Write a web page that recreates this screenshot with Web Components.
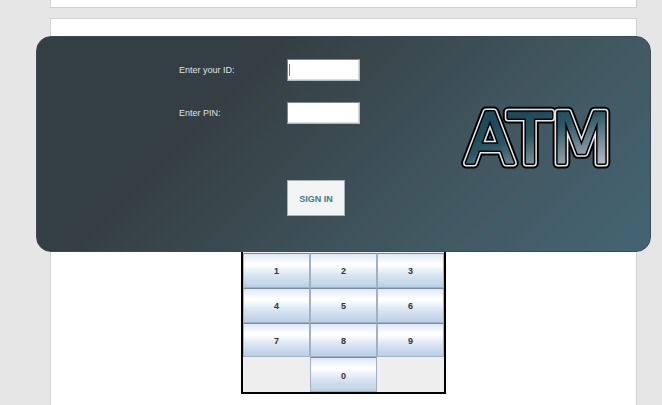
<!DOCTYPE html>
<html lang="en">
<head>
<meta charset="utf-8">
<title>ATM</title>
<style>
html, body { height: 100%; }
body { margin: 0; background: #e6e6e6; font-family: "Liberation Sans", Arial, sans-serif; font-size: 10px; }
</style>
</head>
<body>
<atm-page>
  <page-card slot="previous"></page-card>
  <page-card slot="current">
    <login-panel>
      <login-field label="Enter your ID:" name="id" type="text" active></login-field>
      <login-field label="Enter PIN:" name="pin" type="password"></login-field>
      <sign-button slot="action">SIGN IN</sign-button>
      <atm-logo slot="logo"></atm-logo>
    </login-panel>
    <key-pad></key-pad>
  </page-card>
</atm-page>

<script>
const define = (name, html, setup) => {
  const template = document.createElement('template');
  template.innerHTML = html;
  customElements.define(name, class extends HTMLElement {
    constructor() {
      super();
      this.attachShadow({ mode: 'open' }).append(template.content.cloneNode(true));
    }
    connectedCallback() { if (setup) setup(this, this.shadowRoot); }
  });
};

define('atm-page', `
<style>
  :host { display: flex; flex-direction: column; gap: 10px; height: 100%; box-sizing: border-box; padding: 0 25px 0 50px; overflow: hidden; }
  ::slotted([slot=previous]) { height: 8px; flex: none; border-top: 0; }
  ::slotted([slot=current]) { flex: 1; border-bottom: 0; }
</style>
<slot name="previous"></slot>
<slot name="current"></slot>`);

define('page-card', `
<style>
  :host { display: flex; flex-direction: column; align-items: stretch; box-sizing: border-box; background: #fff; border: 1px solid #d2d2d2; }
</style>
<slot></slot>`);

define('login-panel', `
<style>
  :host { display: block; margin: 17px -15px 0; position: relative; z-index: 1; }
  form { display: flex; justify-content: space-between; align-items: flex-start; box-sizing: border-box; min-height: 216px; margin: 0;
    padding: 22px 28px 34px 142px; border-radius: 15px; border: 1px solid #3a4b52;
    background: linear-gradient(135deg, #343f43 0%, #353f43 30%, #415861 70%, #446472 100%); }
  .fields { display: flex; flex-direction: column; gap: 21px; }
  .action { padding: 35px 0 0 108px; }
  .logo { align-self: center; }
</style>
<form onsubmit="return false">
  <div class="fields"><slot></slot><div class="action"><slot name="action"></slot></div></div>
  <div class="logo"><slot name="logo"></slot></div>
</form>`);

define('login-field', `
<style>
  :host { display: grid; grid-template-columns: 108px 73px; align-items: center; }
  label { color: #dfe3e4; font-size: 9px; line-height: 12px; }
  input { box-sizing: border-box; width: 100%; height: 22px; margin: 0; padding: 1px 3px; border: 1px solid; border-color: #7a8a99 #aebbc5 #aebbc5 #7a8a99;
    border-radius: 0; outline: 0; box-shadow: inset -1px -1px #d5dce2; background: #fff no-repeat 1px 4px / 1px 12px; font: inherit; }
  :host([active]) input { background-image: linear-gradient(#777, #777); }
</style>
<label for="field"></label><input id="field">`, (host, root) => {
  root.querySelector('label').textContent = host.getAttribute('label');
  const input = root.querySelector('input');
  input.name = host.getAttribute('name');
  input.type = host.getAttribute('type');
});

define('sign-button', `
<style>
  :host { display: block; }
  button { display: block; width: 58px; height: 36px; padding: 2px 0 0; border: 1px solid #a3b1b8; border-radius: 0; background: #f3f5f5; color: #3b7a8c;
    font: bold 9px/12px "Liberation Sans", Arial, sans-serif; }
</style>
<button type="button"><slot></slot></button>`);

define('atm-logo', `
<style>
  :host { display: block; }
  svg { display: block; }
  text { font-family: "DejaVu Sans", Verdana, sans-serif; font-size: 70px; stroke-linejoin: round; }
</style>
<svg width="162" height="90" viewBox="0 0 162 90" role="img" aria-label="ATM">
  <defs><linearGradient id="metal" gradientUnits="userSpaceOnUse" x1="14" y1="39" x2="36" y2="105">
    <stop offset="0" stop-color="#1e4a59"/><stop offset=".3" stop-color="#2b5664"/><stop offset="1" stop-color="#b4b8bf"/>
  </linearGradient></defs>
  <text x="6" y="70" fill="#000" stroke="#000" stroke-width="11">ATM</text>
  <text x="6" y="70" fill="#fff" stroke="#e8e8e4" stroke-width="7" aria-hidden="true">ATM</text>
  <text x="6" y="70" fill="#000" stroke="#000" stroke-width="4" aria-hidden="true">ATM</text>
  <text x="6" y="70" fill="url(#metal)" stroke="url(#metal)" stroke-width="1" aria-hidden="true">ATM</text>
</svg>`);

define('key-pad', `
<style>
  :host { display: grid; align-self: center; grid-template-columns: repeat(3, 67px); grid-template-rows: repeat(4, 1fr); height: 142px; box-sizing: border-box;
    border: 2px solid #000; border-top: 0; background: #eee; padding-top: 1px; }
  button { box-sizing: border-box; margin: 0; padding: 2px 0 0; border: 1px solid #9fb1c2; border-top-color: #7a8a99; border-radius: 0;
    background: linear-gradient(#dde8f3 0%, #fff 30%, #fff 34%, #dde8f3 60%, #b8cfe5 100%); color: #333;
    font: bold 9px/12px "Liberation Sans", Arial, sans-serif; }
  .zero { grid-column: 2; }
</style>
<button>1</button><button>2</button><button>3</button>
<button>4</button><button>5</button><button>6</button>
<button>7</button><button>8</button><button>9</button>
<button class="zero">0</button>`);
</script>
</body>
</html>
